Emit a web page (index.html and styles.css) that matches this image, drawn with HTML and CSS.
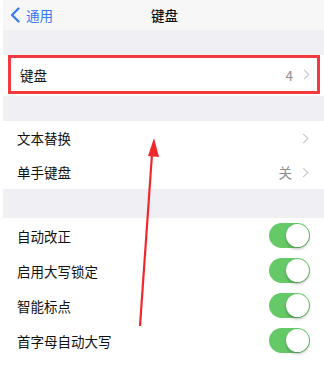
FILE: index.html
```html
<!DOCTYPE html>
<html lang="zh">
<head>
  <meta charset="UTF-8">
  <title>键盘</title>
  <link rel="stylesheet" href="styles.css">
</head>
<body>
  <div class="screen">
    <div class="nav">
      <div class="back">
        <svg width="10" height="16" viewBox="0 0 10 16"><path d="M8.5 1.5 L2 8 L8.5 14.5" fill="none" stroke="#3478f6" stroke-width="2.2" stroke-linecap="round" stroke-linejoin="round"/></svg>
        <span>通用</span>
      </div>
      <div class="title">键盘</div>
    </div>

    <div class="spacer top"></div>
    <div class="group first">
      <div class="row highlight">
        <span class="label">键盘</span>
        <span class="value">4</span>
        <span class="chev"></span>
      </div>
    </div>

    <div class="spacer"></div>
    <div class="group">
      <div class="row">
        <span class="label">文本替换</span>
        <span class="chev"></span>
      </div>
      <div class="row">
        <span class="label">单手键盘</span>
        <span class="value">关</span>
        <span class="chev"></span>
      </div>
    </div>

    <div class="spacer mid"></div>
    <div class="group tall">
      <div class="row"><span class="label">自动改正</span><span class="toggle"></span></div>
      <div class="row"><span class="label">启用大写锁定</span><span class="toggle"></span></div>
      <div class="row"><span class="label">智能标点</span><span class="toggle"></span></div>
      <div class="row"><span class="label">首字母自动大写</span><span class="toggle"></span></div>
    </div>

    <svg class="arrow" width="40" height="200" viewBox="0 0 40 200">
      <line x1="15" y1="188" x2="27" y2="16" stroke="#f2272c" stroke-width="2.2"/>
      <polygon points="29,0 34,19 23,18" fill="#f2272c"/>
    </svg>
  </div>
</body>
</html>
```

FILE: styles.css
```css
body {
  margin: 0;
  background: #fff;
  font-family: "Noto Sans CJK SC", "Noto Sans", sans-serif;
}

.screen {
  position: relative;
  width: 321px;
  height: 368px;
  margin-left: 3px;
  background: #fff;
}

.nav {
  position: relative;
  height: 30px;
  background: #f7f7f8;
  display: flex;
  align-items: center;
}

.back {
  display: flex;
  align-items: center;
  gap: 6px;
  padding-left: 7px;
  color: #3478f6;
  font-size: 13.5px;
}

.title {
  position: absolute;
  left: 0;
  right: 0;
  text-align: center;
  font-size: 13.5px;
  font-weight: 500;
  color: #111;
  margin-left: 2px;
}

.spacer {
  height: 25px;
  background: #efeff4;
}

.spacer.mid {
  height: 29px;
}

.group {
  background: #fff;
}

.group.first {
  padding-bottom: 2px;
}

.row {
  display: flex;
  align-items: center;
  height: 34px;
  padding: 0 14px 0 14px;
  font-size: 13.5px;
  color: #111;
}

.tall .row {
  height: 35px;
}

.label {
  flex: 1;
}

.value {
  color: #8e8e93;
  margin-right: 8px;
}

.chev {
  width: 6px;
  height: 6px;
  border-top: 1.5px solid #c4c4c9;
  border-right: 1.5px solid #c4c4c9;
  transform: rotate(45deg);
  margin-right: 3px;
}

.highlight {
  height: 33px;
  margin: 0 4px 0 5px;
  padding: 0 6px 0 9px;
  border: 3.5px solid #f43a3f;
}

.toggle {
  position: relative;
  width: 41px;
  height: 25px;
  border-radius: 13px;
  background: #65c967;
}

.toggle::after {
  content: "";
  position: absolute;
  right: 1px;
  top: 1px;
  width: 23px;
  height: 23px;
  border-radius: 50%;
  background: #fff;
  box-shadow: 0 2px 3px rgba(0, 0, 0, 0.25);
}

.arrow {
  position: absolute;
  left: 122px;
  top: 138px;
}
```
